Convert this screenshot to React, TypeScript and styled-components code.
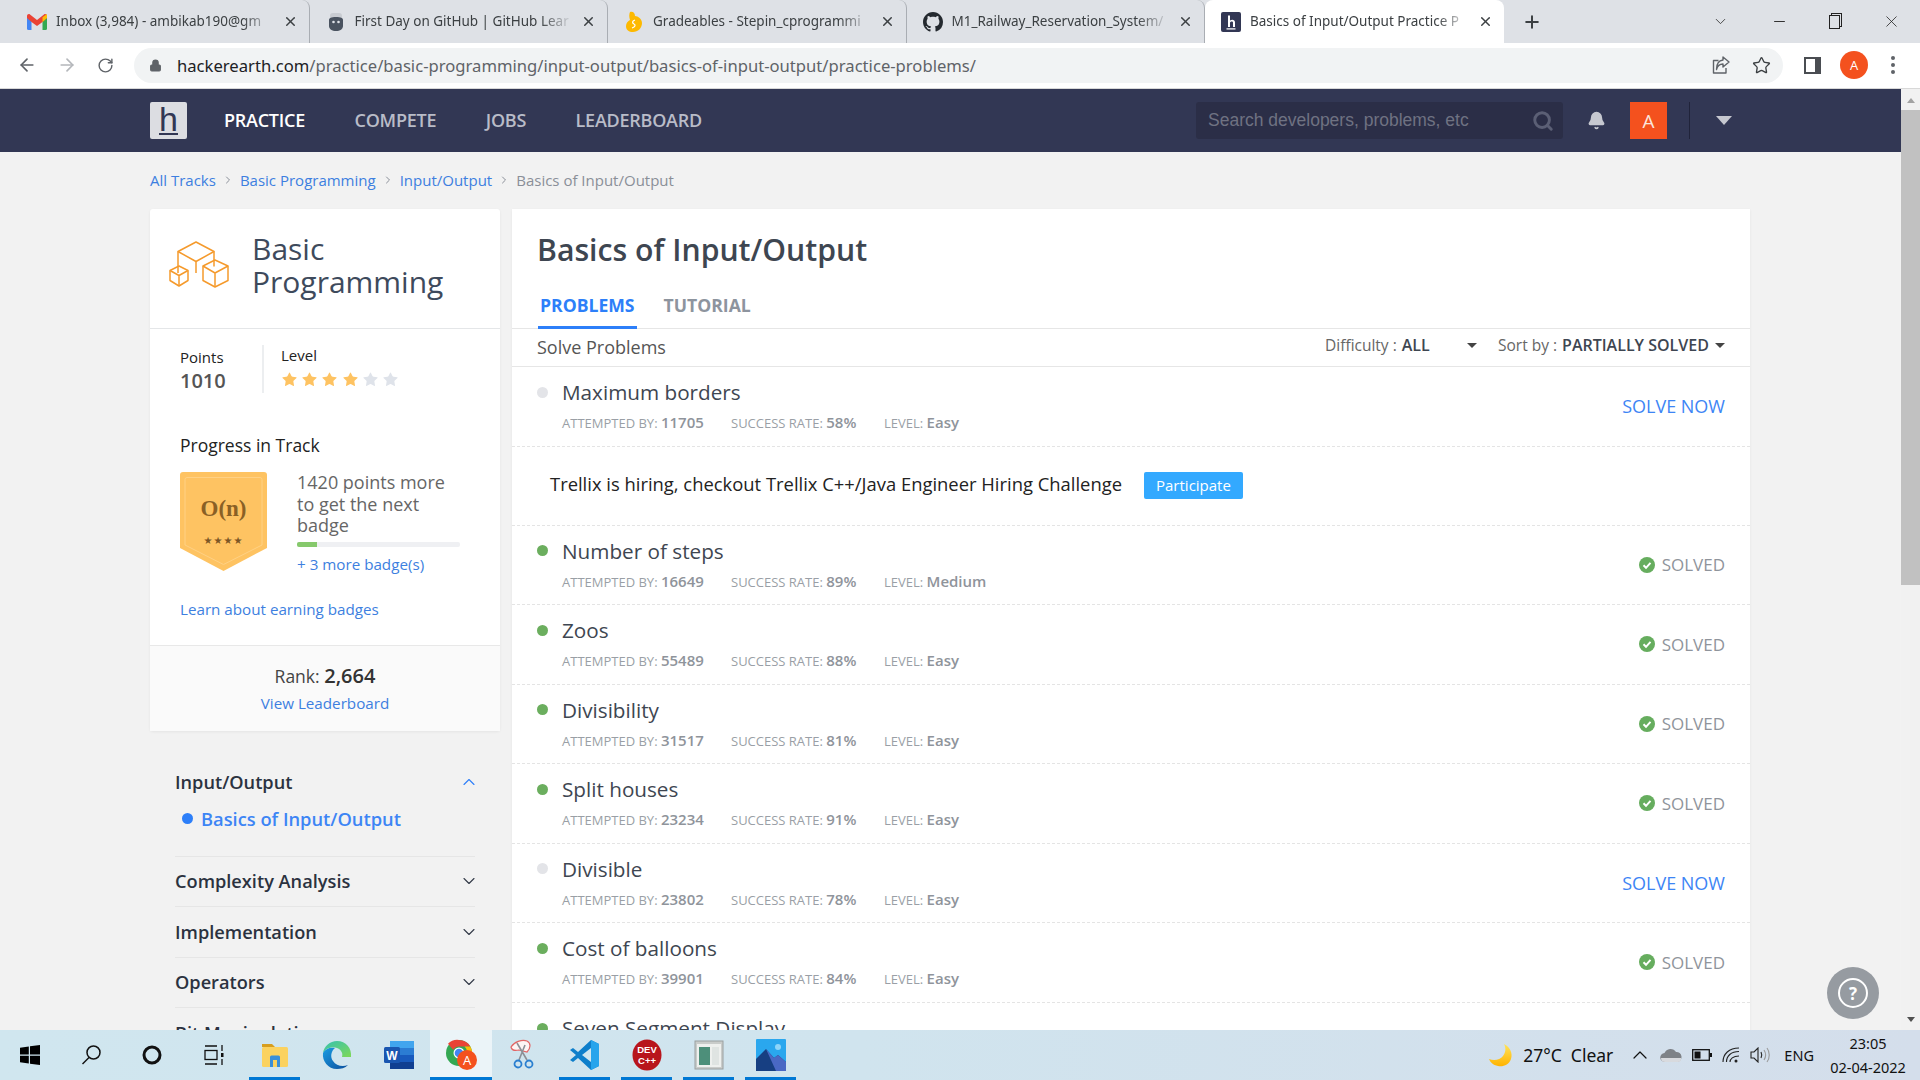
import { ReactNode } from 'react';
import styled, { createGlobalStyle } from 'styled-components';
import { ChevronDown, ChevronUp, Bell, Search, Star, Lock, ArrowLeft, ArrowRight, RotateCw, X, Plus, Minus, ChevronRight } from 'lucide-react';

const GlobalStyle = createGlobalStyle`
  html, body {
    margin: 0;
    padding: 0;
    width: 1920px;
    height: 1080px;
    overflow: hidden;
    background: #f2f2f2;
    font-family: "Open Sans", "Noto Sans", sans-serif;
  }
  * { box-sizing: border-box; }
`;

type Problem = {
  name: string;
  attempted?: string;
  rate?: string;
  level?: string;
  solved: boolean;
};

const problemsTop: Problem[] = [
  { name: 'Maximum borders', attempted: '11705', rate: '58%', level: 'Easy', solved: false },
];

const problemsRest: Problem[] = [
  { name: 'Number of steps', attempted: '16649', rate: '89%', level: 'Medium', solved: true },
  { name: 'Zoos', attempted: '55489', rate: '88%', level: 'Easy', solved: true },
  { name: 'Divisibility', attempted: '31517', rate: '81%', level: 'Easy', solved: true },
  { name: 'Split houses', attempted: '23234', rate: '91%', level: 'Easy', solved: true },
  { name: 'Divisible', attempted: '23802', rate: '78%', level: 'Easy', solved: false },
  { name: 'Cost of balloons', attempted: '39901', rate: '84%', level: 'Easy', solved: true },
  { name: 'Seven Segment Display', solved: true },
];

const GmailIcon = () => (
  <svg width="20" height="16" viewBox="0 0 20 16">
    <path d="M0 3v11.5A1.5 1.5 0 0 0 1.5 16H4.5V7L0 3z" fill="#4285f4" />
    <path d="M20 3v11.5a1.5 1.5 0 0 1-1.5 1.5H15.5V7L20 3z" fill="#34a853" />
    <path d="M4.5 8 0 4V2C0 .4 1.8-.5 3 .5L10 6l7-5.500c1.200-1 3-.1 3 1.500v2l-4.500 4L10 12z" fill="#ea4335" />
    <path d="M15.500 3.200 20 0v4l-4.500 4z" fill="#fbbc04" />
  </svg>
);

const GhLearnIcon = () => (
  <svg width="18" height="20" viewBox="0 0 18 20">
    <rect x="3" y="1" width="12" height="6" rx="3" fill="#c9ccd2" />
    <path d="M2 8c0-2 2-3 7-3s7 1 7 3v6c0 3-3 5-7 5s-7-2-7-5z" fill="#4a5360" />
    <circle cx="6.500" cy="10" r="1.300" fill="#dfe3e8" />
    <circle cx="11.500" cy="10" r="1.300" fill="#dfe3e8" />
  </svg>
);

const GradeIcon = () => (
  <svg width="20" height="22" viewBox="0 0 20 22">
    <path d="M6 1c3-1 5 1 5 4 3 0 7 3 7 7 0 5-4 9-9 9-4 0-7-2-7-6 0-3 2-5 4-6-1-3-1-6 0-8z" fill="#fdb900" />
    <path d="M11 9c-3 1-3 3-1 4s1 3-2 4" stroke="#fff" strokeWidth="1.300" fill="none" />
  </svg>
);

const GithubIcon = () => (
  <svg width="20" height="20" viewBox="0 0 16 16" fill="#24292f">
    <path d="M8 0C3.580 0 0 3.580 0 8c0 3.540 2.290 6.530 5.470 7.590.4.070.55-.17.55-.38 0-.19-.01-.82-.01-1.490-2.010.37-2.530-.49-2.690-.94-.09-.23-.48-.94-.82-1.130-.28-.15-.68-.52-.01-.53.63-.01 1.080.58 1.230.82.72 1.210 1.870.87 2.330.66.070-.52.280-.87.510-1.070-1.780-.2-3.640-.89-3.640-3.950 0-.87.310-1.590.820-2.150-.08-.2-.36-1.020.08-2.120 0 0 .67-.21 2.200.82.640-.18 1.320-.27 2-.27s1.360.09 2 .27c1.530-1.040 2.200-.82 2.200-.82.440 1.100.16 1.920.08 2.120.51.560.82 1.270.82 2.150 0 3.070-1.870 3.750-3.650 3.950.290.250.540.730.540 1.480 0 1.070-.01 1.930-.01 2.200 0 .210.150.460.550.380A8.010 8.010 0 0 0 16 8c0-4.420-3.580-8-8-8z" />
  </svg>
);

const HeFavicon = () => (
  <svg width="20" height="20" viewBox="0 0 20 20">
    <rect width="20" height="20" rx="2" fill="#323754" />
    <path d="M7 3.500h2v5c2-1.500 5-1 5 2v4.500h-2v-4.500c0-1.500-3-1.500-3 .5v4H7z" fill="#fff" />
    <rect x="5.500" y="16.300" width="9" height="1.200" fill="#fff" />
  </svg>
);

const ShareIcon = () => (
  <svg width="20" height="20" viewBox="0 0 20 20" fill="none" stroke="#5f6368" strokeWidth="1.400" strokeLinejoin="round">
    <path d="M7.500 5.500H2.500V18H15v-5" />
    <path d="M12 2l6 5-6 5V9C8.500 9 6.500 10.500 5.500 14.500 5.500 9 8 5.500 12 5z" />
  </svg>
);

const BoxesIcon = () => (
  <svg width="60" height="52" viewBox="0 0 60 52" fill="none" stroke="#f59a2c" strokeWidth="1.500" strokeLinejoin="round">
    <path d="M9 12.500 27 3l18 9.500-18 10z" />
    <path d="M9 12.500V34M27 22.500V34M45 12.500v15" />
    <path d="M1 31.500 10 27l9 4.500v10L10 47l-9-5.500z" />
    <path d="M1 31.500 10 36.500l9-5M10 36.500V47" />
    <path d="M34 27l12-6 13 6v14.500L46 48l-12-6.500z" />
    <path d="M34 27l12 7 13-7M46 34v14" />
  </svg>
);

const ShieldBadge = () => (
  <svg width="87" height="99" viewBox="0 0 87 99">
    <path d="M3 0h81a3 3 0 0 1 3 3v73L43.500 99 0 76V3a3 3 0 0 1 3-3z" fill="#fec362" />
    <path d="M7 5.500h73a2 2 0 0 1 2 2v65.500L43.500 92.500 5 73V7.500a2 2 0 0 1 2-2z" fill="none" stroke="#ffd184" strokeWidth="1" />
    <text x="43.500" y="44" textAnchor="middle" fontFamily="Liberation Serif, serif" fontWeight="700" fontSize="23" fill="#8a6025">O(n)</text>
    <text x="43.500" y="72" textAnchor="middle" fontFamily="DejaVu Sans, sans-serif" fontSize="10" letterSpacing="1" fill="#7b5524">★★★★</text>
  </svg>
);

const SolvedCheck = () => (
  <svg width="16" height="16" viewBox="0 0 16 16">
    <circle cx="8" cy="8" r="8" fill="#66ad5e" />
    <path d="M4.500 8.300 7 10.800l4.500-5" stroke="#fff" strokeWidth="2" fill="none" />
  </svg>
);

const WinLogo = () => (
  <svg width="20" height="20" viewBox="0 0 20 20" fill="#000">
    <path d="M0 2.800 8.800 1.500V9.500H0zM10 1.300 20 0V9.500H10zM0 10.700H8.800V18.500L0 17.200zM10 10.700H20V20L10 18.700z" />
  </svg>
);

const SearchTask = () => (
  <svg width="24" height="24" viewBox="0 0 24 24" fill="none" stroke="#111" strokeWidth="1.500">
    <circle cx="14.500" cy="9.500" r="6.500" />
    <path d="M10 14.500 3.500 21" />
  </svg>
);

const Cortana = () => (
  <svg width="20" height="20" viewBox="0 0 20 20" fill="none" stroke="#111" strokeWidth="3">
    <circle cx="10" cy="10" r="8" />
  </svg>
);

const TaskView = () => (
  <svg width="22" height="22" viewBox="0 0 22 22" fill="none" stroke="#111" strokeWidth="1.300">
    <rect x="3" y="6.500" width="12" height="9" />
    <path d="M3 2h12M3 20h12M20 1v6M20 15v6" />
    <rect x="19" y="9" width="2.500" height="4" fill="#111" stroke="none" />
  </svg>
);

const FolderIcon = () => (
  <svg width="28" height="28" viewBox="0 0 28 28">
    <path d="M1 3h10l3 3H1z" fill="#d79e1e" />
    <rect x="1" y="6" width="26" height="20" rx="1.500" fill="#fbd25f" />
    <path d="M9 26V16a1.500 1.500 0 0 1 1.500-1.500h7A1.500 1.500 0 0 1 19 16v10h-3v-7h-4v7z" fill="#3a8fd8" />
  </svg>
);

const EdgeIcon = () => (
  <svg width="30" height="30" viewBox="0 0 30 30">
    <defs>
      <linearGradient id="edgeA" x1="0" y1="0" x2="1" y2="1">
        <stop offset="0" stopColor="#35c1b1" />
        <stop offset="1" stopColor="#7fd957" />
      </linearGradient>
      <linearGradient id="edgeB" x1="0" y1="0" x2="1" y2="1">
        <stop offset="0" stopColor="#1b9de2" />
        <stop offset="1" stopColor="#0b4f9e" />
      </linearGradient>
    </defs>
    <path d="M15 1C8 1 2 6 1 13c3-5 9-7 14-5 5 2 6 6 5 9h9c1-9-5-16-14-16z" fill="url(#edgeA)" />
    <path d="M1 13c-1 8 5 16 14 16 4 0 8-1 11-4-5 2-12 1-15-4-3-4-2-10 2-13C8 7 3 9 1 13z" fill="url(#edgeB)" />
  </svg>
);

const WordIcon = () => (
  <svg width="30" height="28" viewBox="0 0 30 28">
    <rect x="6" y="0" width="24" height="7" fill="#41a5ee" />
    <rect x="6" y="7" width="24" height="7" fill="#2b7cd3" />
    <rect x="6" y="14" width="24" height="7" fill="#185abd" />
    <rect x="6" y="21" width="24" height="7" fill="#103f91" />
    <rect x="0" y="6" width="16" height="16" rx="1.500" fill="#1a56b0" />
    <text x="8" y="18.500" textAnchor="middle" fontFamily="Liberation Sans, sans-serif" fontWeight="700" fontSize="12" fill="#fff">W</text>
  </svg>
);

const ChromeTask = () => (
  <svg width="32" height="32" viewBox="0 0 32 32">
    <circle cx="14" cy="14" r="13" fill="#34a853" />
    <path d="M14 1a13 13 0 0 1 11.300 6.500H14A6.500 6.500 0 0 0 8.300 11L3 4.800A13 13 0 0 1 14 1z" fill="#ea4335" />
    <path d="M25.300 7.500A13 13 0 0 1 14 27l5.600-9.800a6.500 6.500 0 0 0 0-9.700z" fill="#fbbc04" />
    <circle cx="14" cy="14" r="5.500" fill="#fff" />
    <circle cx="14" cy="14" r="4.300" fill="#4285f4" />
    <circle cx="22" cy="21" r="10" fill="#f4511e" />
    <text x="22" y="26" textAnchor="middle" fontFamily="Open Sans, sans-serif" fontSize="13" fill="#fff">A</text>
  </svg>
);

const SnipIcon = () => (
  <svg width="30" height="32" viewBox="0 0 30 32" fill="none">
    <path d="M3 8C6 3 14 0 19 2c4 2 4 7 0 11l-8-2C7 12 4 12 3 8z" stroke="#e26565" strokeWidth="1.200" fill="#fdf4f4" />
    <path d="M9 4 19 21M17 6l-6 15" stroke="#8c9097" strokeWidth="1.600" />
    <circle cx="21" cy="25" r="3.500" stroke="#2a7fd0" strokeWidth="1.800" />
    <circle cx="10" cy="25" r="3.500" stroke="#2a7fd0" strokeWidth="1.800" />
  </svg>
);

const VsCodeIcon = () => (
  <svg width="30" height="32" viewBox="0 0 30 32">
    <path d="M21 1l8 4v22l-8 4L8 19l-5 4-3-2 6-5-6-5 3-2 5 4z" fill="#0e7fcb" />
    <path d="M21 1l8 4v22l-8 4z" fill="#26a4ec" />
    <path d="M21 9v14l-9-7z" fill="#d0e6ef" />
  </svg>
);

const DevCppIcon = () => (
  <svg width="30" height="32" viewBox="0 0 30 32">
    <ellipse cx="15" cy="16" rx="14.500" ry="15.500" fill="#b8151c" />
    <text x="15" y="14" textAnchor="middle" fontFamily="Liberation Sans, sans-serif" fontWeight="700" fontSize="9.500" fill="#fff">DEV</text>
    <text x="15" y="25" textAnchor="middle" fontFamily="Liberation Sans, sans-serif" fontWeight="700" fontSize="9.500" fill="#fff">C++</text>
  </svg>
);

const AppWindowIcon = () => (
  <svg width="30" height="30" viewBox="0 0 30 30">
    <rect x="1" y="1" width="28" height="28" fill="#c9ccca" stroke="#9aa0a0" />
    <rect x="3" y="4" width="24" height="23" fill="#eef0ee" />
    <rect x="5" y="7" width="11" height="18" fill="#4d8f7a" />
    <rect x="18" y="7" width="7" height="18" fill="#dfe4e2" />
  </svg>
);

const PhotosIcon = () => (
  <svg width="30" height="32" viewBox="0 0 30 32">
    <rect width="30" height="32" rx="1" fill="#2aa7ee" />
    <path d="M0 32V20l10-10 8 9 4-3 8 7v9z" fill="#173f82" />
    <path d="M10 10l8 9 4-3 8 7v9H20z" fill="#4a68c4" />
    <circle cx="22" cy="8" r="3" fill="#8ed5f9" />
  </svg>
);

const MoonIcon = () => (
  <svg width="24" height="24" viewBox="0 0 24 24">
    <defs>
      <linearGradient id="moonFill" x1="0" y1="0" x2="0" y2="1">
        <stop offset="0" stopColor="#ffe45c" />
        <stop offset="1" stopColor="#ffb300" />
      </linearGradient>
    </defs>
    <path d="M15 1c6 3 9 9 7 15s-8 8-13 7-8-4-9-7c5 2 11 1 14-3s3-8 1-12z" fill="url(#moonFill)" />
  </svg>
);

const CloudIcon = () => (
  <svg width="22" height="14" viewBox="0 0 22 14">
    <path d="M5 14a4.500 4.500 0 0 1-.5-9A6.500 6.500 0 0 1 16 4a5 5 0 0 1 1 10z" fill="#7e8287" />
    <path d="M1 10h20v1a3 3 0 0 1-3 3H5a4 4 0 0 1-4-4z" fill="#d8dade" />
  </svg>
);

const BatteryIcon = () => (
  <svg width="20" height="12" viewBox="0 0 20 12">
    <rect x=".7" y=".7" width="16.600" height="10.600" fill="none" stroke="#111" strokeWidth="1.300" />
    <rect x="2.500" y="2.500" width="6" height="7" fill="#111" />
    <rect x="18" y="4" width="2" height="4" fill="#111" />
  </svg>
);

const WifiIcon = () => (
  <svg width="18" height="16" viewBox="0 0 18 16" fill="none" stroke="#222" strokeWidth="1.100">
    <path d="M1 15C1 7 7 1 17 1M4.500 15C4.500 9 9 4.500 17 4.500M8 15c0-3 3-6 9-6" />
    <circle cx="14" cy="14" r="1.500" fill="#222" stroke="none" />
  </svg>
);

const VolumeIcon = () => (
  <svg width="20" height="16" viewBox="0 0 20 16" fill="none" stroke="#222" strokeWidth="1.100">
    <path d="M1 5h3l4-4v14l-4-4H1z" />
    <path d="M11 5c1 2 1 4 0 6" />
    <path d="M14 3c2 3 2 7 0 10M17 1c3 4 3 10 0 14" stroke="#999" />
  </svg>
);

const Tab = ({ icon, label, active }: { icon: ReactNode; label: string; active?: boolean }) => (
  <TabItem $active={active}>
    <TabIcon>{icon}</TabIcon>
    <TabLabel>{label}</TabLabel>
    <X size={15} strokeWidth={2.400} color="#3c4043" />
  </TabItem>
);

const ProblemRow = ({ problem }: { problem: Problem }) => (
  <Row>
    <RowMain>
      <RowTitle>
        <Dot $solved={problem.solved} />
        <RowName>{problem.name}</RowName>
      </RowTitle>
      <RowMeta>
        {problem.attempted && (
          <>
            <MetaItem $width={169}>Attempted by: <b>{problem.attempted}</b></MetaItem>
            <MetaItem $width={153}>Success rate: <b>{problem.rate}</b></MetaItem>
            <MetaItem>Level: <b>{problem.level}</b></MetaItem>
          </>
        )}
      </RowMeta>
    </RowMain>
    {problem.solved ? (
      <SolvedLabel><SolvedCheck />SOLVED</SolvedLabel>
    ) : (
      <SolveNow>SOLVE NOW</SolveNow>
    )}
  </Row>
);

const AccordionRow = ({ label }: { label: string }) => (
  <AccordionItem>
    <AccordionTitle>{label}</AccordionTitle>
    <ChevronDown size={20} strokeWidth={1.300} color="#333a48" />
  </AccordionItem>
);

const taskIcons: { icon: ReactNode; system?: boolean; running?: boolean; focused?: boolean }[] = [
  { icon: <WinLogo />, system: true },
  { icon: <SearchTask />, system: true },
  { icon: <Cortana />, system: true },
  { icon: <TaskView />, system: true },
  { icon: <FolderIcon />, running: true },
  { icon: <EdgeIcon /> },
  { icon: <WordIcon /> },
  { icon: <ChromeTask />, running: true, focused: true },
  { icon: <SnipIcon /> },
  { icon: <VsCodeIcon />, running: true },
  { icon: <DevCppIcon />, running: true },
  { icon: <AppWindowIcon />, running: true },
  { icon: <PhotosIcon />, running: true },
];

const App = () => {
  return (
    <Screen>
      <GlobalStyle />
      <TabStrip>
        <Tab icon={<GmailIcon />} label="Inbox (3,984) - ambikab190@gm" />
        <Tab icon={<GhLearnIcon />} label="First Day on GitHub | GitHub Lear" />
        <Tab icon={<GradeIcon />} label="Gradeables - Stepin_cprogrammi" />
        <Tab icon={<GithubIcon />} label="M1_Railway_Reservation_System/" />
        <Tab icon={<HeFavicon />} label="Basics of Input/Output Practice P" active />
        <NewTab><Plus size={20} strokeWidth={2.400} color="#3c4043" /></NewTab>
        <WindowControls>
          <ChevronDown size={17} strokeWidth={1.200} color="#333" />
          <Minus size={17} strokeWidth={1.300} color="#222" />
          <RestoreIcon />
          <X size={19} strokeWidth={1} color="#222" />
        </WindowControls>
      </TabStrip>

      <AddressRow>
        <ArrowLeft size={20} color="#5f6368" />
        <ArrowRight size={20} color="#b4b7bb" />
        <RotateCw size={17} color="#5f6368" />
        <UrlBar>
          <Lock size={13} color="#5f6368" fill="#5f6368" />
          <UrlText><strong>hackerearth.com</strong>/practice/basic-programming/input-output/basics-of-input-output/practice-problems/</UrlText>
          <UrlActions>
            <ShareIcon />
            <Star size={19} color="#3c4043" strokeWidth={1.700} />
          </UrlActions>
        </UrlBar>
        <ProfileArea>
          <SidePanelIcon />
          <ProfileCircle>A</ProfileCircle>
          <MenuDots><i /><i /><i /></MenuDots>
        </ProfileArea>
      </AddressRow>

      <Viewport>
        <Page>
          <TopNav>
            <NavInner>
              <Logo>
                <LogoLetter>h</LogoLetter>
              </Logo>
              <NavLink $active>PRACTICE</NavLink>
              <NavLink>COMPETE</NavLink>
              <NavLink>JOBS</NavLink>
              <NavLink>LEADERBOARD</NavLink>
              <SearchBox>
                <SearchText>Search developers, problems, etc</SearchText>
                <Search size={22} strokeWidth={3.200} color="#5b5f75" />
              </SearchBox>
              <NavBell size={19} color="#c6c8d0" fill="#c6c8d0" />
              <NavAvatar>A</NavAvatar>
              <NavDivider />
              <NavCaret />
            </NavInner>
          </TopNav>

          <Container>
            <Breadcrumbs>
              <Crumb>All Tracks</Crumb>
              <ChevronRight size={12} color="#8a8f98" />
              <Crumb>Basic Programming</Crumb>
              <ChevronRight size={12} color="#8a8f98" />
              <Crumb>Input/Output</Crumb>
              <ChevronRight size={12} color="#8a8f98" />
              <CrumbCurrent>Basics of Input/Output</CrumbCurrent>
            </Breadcrumbs>

            <Columns>
              <Sidebar>
                <TrackCard>
                  <TrackHeader>
                    <BoxesIcon />
                    <TrackName>Basic Programming</TrackName>
                  </TrackHeader>
                  <Stats>
                    <PointsBox>
                      <StatLabel>Points</StatLabel>
                      <PointsValue>1010</PointsValue>
                    </PointsBox>
                    <LevelBox>
                      <StatLabel>Level</StatLabel>
                      <Stars>
                        {[0, 1, 2, 3, 4, 5].map((i) => (
                          <Star key={i} size={17} strokeWidth={0} fill={i < 4 ? '#fec362' : '#dfe3ea'} />
                        ))}
                      </Stars>
                    </LevelBox>
                  </Stats>
                  <ProgressSection>
                    <ProgressTitle>Progress in Track</ProgressTitle>
                    <BadgeRow>
                      <ShieldBadge />
                      <BadgeInfo>
                        <BadgeText>1420 points more to get the next badge</BadgeText>
                        <ProgressTrack>
                          <ProgressFill style={{ width: `${(20 / 163) * 100}%` }} />
                        </ProgressTrack>
                        <BlueLink>+ 3 more badge(s)</BlueLink>
                      </BadgeInfo>
                    </BadgeRow>
                    <LearnLink>Learn about earning badges</LearnLink>
                  </ProgressSection>
                  <RankBox>
                    <RankLine>Rank: <b>2,664</b></RankLine>
                    <BlueLink>View Leaderboard</BlueLink>
                  </RankBox>
                </TrackCard>

                <Accordion>
                  <AccordionOpen>
                    <AccordionHead>
                      <AccordionTitle>Input/Output</AccordionTitle>
                      <ChevronUp size={20} strokeWidth={1.300} color="#2d7ff9" />
                    </AccordionHead>
                    <SubItem><SubDot />Basics of Input/Output</SubItem>
                  </AccordionOpen>
                  <AccordionRow label="Complexity Analysis" />
                  <AccordionRow label="Implementation" />
                  <AccordionRow label="Operators" />
                  <AccordionRow label="Bit Manipulation" />
                </Accordion>
              </Sidebar>

              <MainPanel>
                <PanelTitle>Basics of Input/Output</PanelTitle>
                <Tabs>
                  <TabLink $active>PROBLEMS</TabLink>
                  <TabLink>TUTORIAL</TabLink>
                </Tabs>
                <FilterBar>
                  <SolveHeading>Solve Problems</SolveHeading>
                  <Filters>
                    <FilterGroup $width={152}>
                      Difficulty : <b>ALL</b>
                      <SmallCaret />
                    </FilterGroup>
                    <FilterGroup $width={227}>
                      Sort by : <b>PARTIALLY SOLVED</b>
                      <SmallCaret />
                    </FilterGroup>
                  </Filters>
                </FilterBar>
                {problemsTop.map((p) => <ProblemRow key={p.name} problem={p} />)}
                <PromoRow>
                  <PromoText>Trellix is hiring, checkout Trellix C++/Java Engineer Hiring Challenge</PromoText>
                  <ParticipateButton>Participate</ParticipateButton>
                </PromoRow>
                {problemsRest.map((p) => <ProblemRow key={p.name} problem={p} />)}
              </MainPanel>
            </Columns>
          </Container>

          <HelpButton><HelpRing>?</HelpRing></HelpButton>
        </Page>

        <ScrollTrack>
          <ScrollArrow $up />
          <ScrollThumb />
          <ScrollArrow />
        </ScrollTrack>
      </Viewport>

      <Taskbar>
        <TaskIcons>
          {taskIcons.map((t, i) => (
            <TaskCell key={i} $system={t.system} $running={t.running} $focused={t.focused}>{t.icon}</TaskCell>
          ))}
        </TaskIcons>
        <Tray>
          <MoonIcon />
          <Weather>27°C</Weather>
          <Weather>Clear</Weather>
          <TrayIcons>
            <TrayChevron size={24} strokeWidth={1.200} color="#111" />
            <CloudIcon />
            <BatteryIcon />
            <WifiIcon />
            <VolumeIcon />
          </TrayIcons>
          <TrayLang>ENG</TrayLang>
          <Clock>
            <span>23:05</span>
            <span>02-04-2022</span>
          </Clock>
        </Tray>
      </Taskbar>
    </Screen>
  );
};

export default App;

const Screen = styled.div`
  width: 1920px;
  height: 1080px;
  display: flex;
  flex-direction: column;
  overflow: hidden;
`;

const TabStrip = styled.div`
  height: 43px;
  flex: none;
  background: #dee1e6;
  display: flex;
  align-items: stretch;
  padding-left: 11px;
  font-family: "Noto Sans", sans-serif;
`;

const TabItem = styled.div<{ $active?: boolean }>`
  width: 298.500px;
  display: flex;
  align-items: center;
  gap: 8px;
  padding: 0 11px 0 15px;
  border-radius: 8px 8px 0 0;
  background: ${(p) => (p.$active ? '#ffffff' : 'transparent')};
  border-right: ${(p) => (p.$active ? 'none' : '1px solid #a9adb3')};
  background-clip: padding-box;
`;

const TabIcon = styled.span`
  width: 22px;
  display: flex;
  justify-content: center;
  flex: none;
`;

const TabLabel = styled.span`
  flex: 1;
  font-size: 13.500px;
  padding-bottom: 2px;
  color: #3c4043;
  white-space: nowrap;
  overflow: hidden;
  mask-image: linear-gradient(to right, #000 85%, transparent);
`;

const NewTab = styled.span`
  width: 57px;
  display: flex;
  align-items: center;
  justify-content: center;
`;

const WindowControls = styled.div`
  margin-left: auto;
  width: 208px;
  display: flex;
  align-items: center;
  justify-content: space-between;
  padding-right: 19px;
`;

const RestoreIcon = styled.span`
  width: 11px;
  height: 14px;
  border: 1px solid #222;
  box-shadow: 2px -2px 0 -1px #dee1e6, 2px -2px 0 0 #222;
`;

const AddressRow = styled.div`
  height: 46px;
  flex: none;
  background: #fff;
  border-bottom: 1px solid #d8d8d8;
  display: flex;
  align-items: center;
  padding-left: 17px;
  gap: 20px;
  padding-bottom: 1px;
`;

const UrlBar = styled.div`
  width: 1649px;
  height: 35px;
  border-radius: 18px;
  background: #f1f3f4;
  display: flex;
  align-items: center;
  padding: 0 0 0 15px;
  gap: 15px;
`;

const UrlText = styled.div`
  font-family: "Noto Sans", sans-serif;
  font-size: 16.640px;
  color: #5f6368;
  white-space: nowrap;
  strong { font-weight: 400; color: #202124; }
`;

const UrlActions = styled.div`
  margin-left: auto;
  display: flex;
  align-items: center;
  gap: 21px;
  padding-right: 12px;
`;

const ProfileArea = styled.div`
  display: flex;
  align-items: center;
  gap: 21px;
  margin-left: 1px;
`;

const SidePanelIcon = styled.span`
  width: 17px;
  height: 17px;
  border: 2px solid #4a4d52;
  border-right-width: 6px;
`;

const ProfileCircle = styled.span`
  width: 28px;
  height: 28px;
  margin-left: -2px;
  border-radius: 50%;
  background: #f4511e;
  color: #fff;
  font-size: 13px;
  display: flex;
  align-items: center;
  justify-content: center;
`;

const MenuDots = styled.span`
  display: flex;
  flex-direction: column;
  gap: 3px;
  margin-left: 2px;
  i {
    display: block;
    width: 4px;
    height: 4px;
    border-radius: 50%;
    background: #5f6368;
  }
`;

const Viewport = styled.div`
  flex: 1;
  min-height: 0;
  display: flex;
`;

const Page = styled.div`
  position: relative;
  width: 1901px;
  flex: none;
  overflow: hidden;
  background: #f2f2f2;
`;

const TopNav = styled.div`
  height: 63px;
  background: #323754;
`;

const NavInner = styled.div`
  width: 1600px;
  height: 100%;
  margin-left: 150px;
  padding-right: 18px;
  display: flex;
  align-items: center;
`;

const Logo = styled.div`
  width: 37px;
  height: 37px;
  border-radius: 2px;
  background: #dcdde2;
  margin-right: 37px;
  display: flex;
  justify-content: center;
`;

const LogoLetter = styled.span`
  font-family: "Liberation Sans", sans-serif;
  font-size: 34px;
  line-height: 34px;
  color: #323754;
  border-bottom: 2px solid #323754;
  height: 33px;
`;

const NavLink = styled.span<{ $active?: boolean }>`
  font-size: 18px;
  font-weight: 600;
  color: ${(p) => (p.$active ? '#ffffff' : '#b9bcc8')};
  margin-right: 49.500px;
  padding-bottom: 2px;
  letter-spacing: -0.250px;
`;

const SearchBox = styled.div`
  margin-left: auto;
  width: 367px;
  height: 37px;
  border-radius: 3px;
  background: #2b2e47;
  display: flex;
  align-items: center;
  justify-content: space-between;
  padding: 0 9px 0 12px;
`;

const SearchText = styled.span`
  font-family: "Liberation Sans", sans-serif;
  font-size: 17.500px;
  color: #6f7282;
  padding-bottom: 1px;
`;

const NavBell = styled(Bell)`
  margin-left: 24px;
`;

const NavAvatar = styled.div`
  width: 37px;
  height: 37px;
  margin-left: 24px;
  background: #f4511e;
  color: #fbe5dc;
  font-size: 19px;
  display: flex;
  align-items: center;
  justify-content: center;
`;

const NavDivider = styled.div`
  width: 1px;
  height: 37px;
  margin-left: 22px;
  background: #20233a;
`;

const NavCaret = styled.div`
  width: 0;
  height: 0;
  margin-left: 26px;
  border-left: 8px solid transparent;
  border-right: 8px solid transparent;
  border-top: 9px solid #c6c8d0;
`;

const Container = styled.div`
  width: 1600px;
  margin-left: 150px;
`;

const Breadcrumbs = styled.div`
  height: 57px;
  padding-bottom: 2px;
  display: flex;
  align-items: center;
  gap: 6px;
  font-size: 15px;
`;

const Crumb = styled.span`
  color: #3d7fe0;
`;

const CrumbCurrent = styled.span`
  color: #8a8f98;
`;

const Columns = styled.div`
  display: flex;
  gap: 12px;
  align-items: flex-start;
`;

const Sidebar = styled.div`
  width: 350px;
  flex: none;
`;

const TrackCard = styled.div`
  background: #fff;
  border-radius: 3px;
  box-shadow: 0 1px 3px rgba(0, 0, 0, 0.06);
`;

const TrackHeader = styled.div`
  height: 120px;
  border-bottom: 1px solid #e4e6e8;
  display: flex;
  align-items: center;
  padding: 0 40px 7px 19px;
  gap: 23px;
  svg { flex: none; }
`;

const TrackName = styled.div`
  font-size: 30px;
  line-height: 33px;
  color: #3e4a5c;
`;

const Stats = styled.div`
  display: flex;
  padding: 16px 0 0 30px;
`;

const PointsBox = styled.div`
  width: 84px;
  height: 48px;
  border-right: 2px solid #eceef0;
  padding-top: 2px;
`;

const LevelBox = styled.div`
  padding-left: 17px;
`;

const StatLabel = styled.div`
  font-size: 15px;
  line-height: 20px;
  color: #222;
`;

const PointsValue = styled.div`
  font-size: 20px;
  line-height: 27px;
  font-weight: 600;
  color: #555;
`;

const Stars = styled.div`
  display: flex;
  gap: 3.200px;
  margin-top: 6px;
`;

const ProgressSection = styled.div`
  padding: 40px 30px 26px;
`;

const ProgressTitle = styled.div`
  font-size: 17.500px;
  line-height: 24px;
  color: #222;
  margin-bottom: 15px;
`;

const BadgeRow = styled.div`
  display: flex;
  gap: 30px;
`;

const BadgeInfo = styled.div`
  width: 163px;
`;

const BadgeText = styled.div`
  font-size: 18px;
  line-height: 21.500px;
  color: #666;
`;

const ProgressTrack = styled.div`
  height: 5px;
  margin: 5.800px 0 6.500px;
  background: #eff0f3;
  border-radius: 2px;
  overflow: hidden;
`;

const ProgressFill = styled.div`
  height: 100%;
  background: #86c96c;
`;

const BlueLink = styled.div`
  font-size: 15.200px;
  line-height: 20px;
  color: #3d7fe0;
`;

const LearnLink = styled(BlueLink)`
  margin-top: 25.400px;
`;

const RankBox = styled.div`
  height: 85.500px;
  border-top: 1px solid #e8e8e8;
  background: #fafafa;
  text-align: center;
  padding-top: 17px;
`;

const RankLine = styled.div`
  font-size: 17.500px;
  line-height: 25px;
  color: #444;
  margin-bottom: 4px;
  b { font-size: 20px; font-weight: 600; color: #333; }
`;

const Accordion = styled.div`
  margin-top: 26px;
  padding: 0 25px;
`;

const AccordionOpen = styled.div`
  height: 100px;
  border-bottom: 1px solid #e6e6e6;
`;

const AccordionHead = styled.div`
  height: 50px;
  display: flex;
  align-items: center;
  justify-content: space-between;
  svg { margin-right: -4px; }
`;

const AccordionItem = styled(AccordionHead)`
  height: 50.500px;
  border-bottom: 1px solid #e6e6e6;
`;

const AccordionTitle = styled.span`
  font-size: 18.200px;
  font-weight: 600;
  color: #2b3240;
`;

const SubItem = styled.div`
  display: flex;
  align-items: center;
  gap: 8px;
  padding-left: 7px;
  margin-top: -1px;
  font-size: 18.300px;
  font-weight: 600;
  color: #3d85f5;
`;

const SubDot = styled.span`
  width: 11px;
  height: 11px;
  border-radius: 50%;
  background: #2d7ff9;
`;

const MainPanel = styled.div`
  width: 1238px;
  flex: none;
  background: #fff;
  box-shadow: 0 1px 3px rgba(0, 0, 0, 0.06);
`;

const PanelTitle = styled.h1`
  margin: 0;
  padding: 18px 0 0 25px;
  font-size: 30.200px;
  line-height: 45px;
  font-weight: 600;
  color: #3e4651;
`;

const Tabs = styled.div`
  display: flex;
  gap: 25px;
  height: 57px;
  padding: 20px 0 0 26px;
  border-bottom: 1px solid #e6e6e6;
`;

const TabLink = styled.div<{ $active?: boolean }>`
  height: 37px;
  padding: 0 2px;
  font-size: 17.600px;
  font-weight: 700;
  line-height: 26px;
  color: ${(p) => (p.$active ? '#2d7ff9' : '#8d949e')};
  border-bottom: ${(p) => (p.$active ? '3px solid #2d7ff9' : 'none')};
`;

const FilterBar = styled.div`
  height: 38px;
  border-bottom: 1px solid #e6e6e6;
  display: flex;
  align-items: center;
  justify-content: space-between;
  padding: 0 25px 2px 25px;
`;

const SolveHeading = styled.span`
  font-size: 18px;
  color: #555;
`;

const Filters = styled.div`
  display: flex;
  gap: 21px;
`;

const FilterGroup = styled.div<{ $width: number }>`
  width: ${(p) => p.$width}px;
  font-size: 15.500px;
  color: #666;
  white-space: nowrap;
  display: flex;
  align-items: center;
  gap: 5px;
  margin-top: -3px;
  b { font-size: 16px; font-weight: 600; color: #3e4651; }
`;

const SmallCaret = styled.span`
  margin-left: auto;
  width: 0;
  height: 0;
  border-left: 5px solid transparent;
  border-right: 5px solid transparent;
  border-top: 5px solid #444;
`;

const Row = styled.div`
  height: 79.500px;
  border-bottom: 1px dashed #e4e4e4;
  display: flex;
  align-items: center;
  justify-content: space-between;
  padding: 0 25px;
`;

const RowMain = styled.div`
  display: flex;
  flex-direction: column;
`;

const RowTitle = styled.div`
  display: flex;
  align-items: center;
  gap: 14px;
`;

const Dot = styled.span<{ $solved: boolean }>`
  width: 11px;
  height: 11px;
  margin-top: -1px;
  border-radius: 50%;
  background: ${(p) => (p.$solved ? '#6bae5e' : '#e3e4e8')};
`;

const RowName = styled.span`
  font-size: 20.700px;
  line-height: 27px;
  font-weight: 500;
  color: #3e4651;
`;

const RowMeta = styled.div`
  display: flex;
  min-height: 20px;
  padding-left: 25px;
  margin-top: 6px;
`;

const MetaItem = styled.span<{ $width?: number }>`
  width: ${(p) => (p.$width ? `${p.$width}px` : 'auto')};
  font-size: 13px;
  line-height: 20px;
  text-transform: uppercase;
  color: #9a9fa6;
  b { font-size: 15px; font-weight: 600; color: #8f949b; text-transform: none; }
`;

const SolvedLabel = styled.span`
  display: flex;
  align-items: center;
  gap: 7px;
  font-size: 17px;
  color: #8f949b;
`;

const SolveNow = styled.span`
  font-size: 18px;
  color: #3d85f5;
`;

const PromoRow = styled.div`
  height: 79px;
  border-bottom: 1px dashed #e4e4e4;
  display: flex;
  align-items: center;
  gap: 22px;
  padding: 0 0 1px 38px;
`;

const PromoText = styled.span`
  margin-top: -3px;
  font-size: 18.400px;
  font-weight: 500;
  color: #222;
`;

const ParticipateButton = styled.button`
  width: 99px;
  height: 27px;
  border: none;
  border-radius: 2px;
  background: #33a9ff;
  color: #fff;
  font-family: inherit;
  font-size: 15px;
  padding: 0;
`;

const HelpButton = styled.div`
  position: absolute;
  left: 1827px;
  bottom: 11px;
  width: 52px;
  height: 52px;
  border-radius: 50%;
  background: #969ba1;
  display: flex;
  align-items: center;
  justify-content: center;
`;

const HelpRing = styled.div`
  width: 30px;
  height: 30px;
  border-radius: 50%;
  border: 2px solid #fff;
  color: #fff;
  font-size: 17px;
  font-weight: 700;
  display: flex;
  align-items: center;
  justify-content: center;
`;

const ScrollTrack = styled.div`
  flex: 1;
  background: #f1f1f1;
  display: flex;
  flex-direction: column;
`;

const ScrollThumb = styled.div`
  height: 475px;
  background: #c1c1c1;
`;

const ScrollArrow = styled.div<{ $up?: boolean }>`
  width: 0;
  height: 0;
  margin: ${(p) => (p.$up ? '9px auto 7px' : 'auto auto 8px')};
  border-left: 4.500px solid transparent;
  border-right: 4.500px solid transparent;
  ${(p) => (p.$up ? 'border-bottom: 5px solid #a3a3a3;' : 'border-top: 5px solid #505050;')}
`;

const Taskbar = styled.div`
  height: 50px;
  flex: none;
  display: flex;
  justify-content: space-between;
  background: linear-gradient(to right, #d0e6ef, #d0e4ee 45%, #d4deeb);
  border-right: 6px solid #d4deeb;
`;

const TaskIcons = styled.div`
  display: flex;
`;

const TaskCell = styled.div<{ $system?: boolean; $running?: boolean; $focused?: boolean }>`
  position: relative;
  width: ${(p) => (p.$system ? '60.900px' : '62px')};
  display: flex;
  align-items: center;
  justify-content: center;
  background: ${(p) => (p.$focused ? '#ebf4f8' : 'transparent')};
  ${(p) =>
    p.$running
      ? `&::after {
          content: '';
          position: absolute;
          bottom: 0;
          left: ${p.$focused ? '0' : '5.500px'};
          right: ${p.$focused ? '0' : '5.500px'};
          height: 3px;
          background: #0078d4;
        }`
      : ''}
`;

const Tray = styled.div`
  display: flex;
  align-items: center;
  color: #111;
`;

const Weather = styled.span`
  font-family: "Noto Sans", sans-serif;
  font-size: 17.500px;
  margin-left: 9px;
  &:first-of-type { margin-left: 10px; }
`;

const TrayIcons = styled.div`
  display: flex;
  align-items: center;
  gap: 10px;
  margin-left: 15px;
`;

const TrayChevron = styled(ChevronUp)`
  margin-right: -2px;
`;

const TrayLang = styled.span`
  font-family: "Noto Sans", sans-serif;
  font-size: 14.500px;
  margin-left: 14px;
`;

const Clock = styled.div`
  display: flex;
  flex-direction: column;
  align-items: center;
  gap: 4px;
  width: 80px;
  margin-left: 14px;
  margin-right: 6px;
  font-family: "Noto Sans", sans-serif;
  font-size: 14.500px;
  line-height: 20px;
`;
